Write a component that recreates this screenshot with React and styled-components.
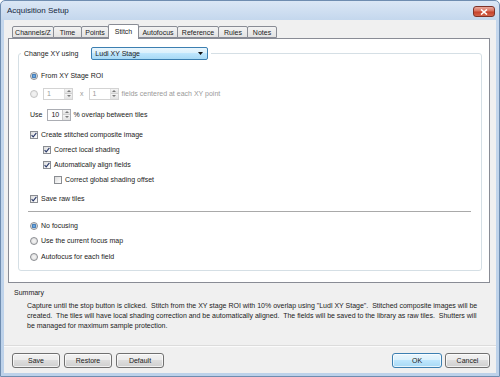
import React from "react";
import styled, { createGlobalStyle } from "styled-components";

const GlobalStyle = createGlobalStyle`
  html, body { margin: 0; padding: 0; background: #ffffff; }
  body { font-family: "Liberation Sans", Arial, sans-serif; }
  * { box-sizing: border-box; }
`;

const Window = styled.div`
  width: 500px;
  height: 377px;
  display: flex;
  flex-direction: column;
  background: linear-gradient(to bottom, #dbe7f5 0px, #c4d7ed 19px, #bdd2ea 100%);
  border: 1px solid #6f8db0;
  border-radius: 5px 5px 0 0;
  padding: 0 3px 3px 3px;
  font-size: 7px;
  color: #1b1b1b;
`;

const TitleBar = styled.div`
  height: 19px;
  display: flex;
  align-items: center;
  padding-left: 3px;
  font-size: 8px;
  color: #14263d;
`;

const CloseButton = styled.div`
  margin-left: auto;
  margin-right: 1px;
  align-self: flex-start;
  margin-top: 5px;
  width: 22px;
  height: 11px;
  border: 1px solid #7e3328;
  border-radius: 3px;
  background: linear-gradient(to bottom, #e9a99c 0%, #d8705d 45%, #c7412a 55%, #d3644b 100%);
  display: flex;
  align-items: center;
  justify-content: center;
`;

const Client = styled.div`
  flex: 1;
  background: #f0f0f0;
  display: flex;
  flex-direction: column;
  padding: 4px 6px 5px 4px;
`;

const TabStrip = styled.div`
  display: flex;
  align-items: flex-end;
  height: 14px;
  padding-left: 4px;
`;

const Tab = styled.div`
  width: ${p => p.w}px;
  height: ${p => (p.active ? 15 : 12)}px;
  margin-right: -1px;
  margin-bottom: ${p => (p.active ? -1 : 0)}px;
  border: 1px solid #898c95;
  border-bottom: ${p => (p.active ? "none" : "1px solid #898c95")};
  border-radius: 2px 2px 0 0;
  background: ${p => (p.active ? "#ffffff" : "linear-gradient(to bottom, #f3f3f3, #e3e3e3)")};
  display: flex;
  align-items: center;
  justify-content: center;
  position: relative;
  z-index: ${p => (p.active ? 1 : 0)};
  padding-bottom: ${p => (p.active ? 2 : 0)}px;
`;

const Panel = styled.div`
  height: 245px;
  border: 1px solid #898c95;
  background: #ffffff;
  display: flex;
  flex-direction: column;
  padding: 7px 7px 11px 9px;
`;

const Group = styled.fieldset`
  flex: 1;
  margin: 0;
  min-width: 0;
  border: 1px solid #d5dfe5;
  border-radius: 3px;
  padding: 0 10px 0 11px;
`;

const Legend = styled.legend`
  display: flex;
  align-items: center;
  gap: 13px;
  height: 14px;
  padding: 0 3px;
  margin-left: -9px;
`;

const Combo = styled.div`
  width: 117px;
  height: 13px;
  border: 1px solid #3c7fb1;
  border-radius: 2px;
  background: linear-gradient(to bottom, #eaf6fd 0%, #d9f0fc 50%, #bee6fd 50%, #a7d9f5 100%);
  display: flex;
  align-items: center;
  justify-content: space-between;
  padding: 0 4px 0 3px;
`;

const Row = styled.div`
  display: flex;
  align-items: center;
  height: 15px;
  margin-top: ${p => p.mt || 0}px;
  padding-left: ${p => p.indent || 0}px;
  color: ${p => (p.disabled ? "#9a9a9a" : "inherit")};
  white-space: nowrap;
`;

const Radio = styled.span`
  width: 8px;
  height: 8px;
  border-radius: 50%;
  border: 1px solid ${p => (p.disabled ? "#c4c4c4" : "#8a8d92")};
  background: ${p =>
    p.checked
      ? "radial-gradient(circle, #8fc3ee 0px, #2f6eb0 2px, #e4e4e4 2.6px, #f7f7f7 100%)"
      : p.disabled
      ? "radial-gradient(circle, #f4f4f4, #e6e6e6)"
      : "radial-gradient(circle, #f6f6f6, #d8d8d8)"};
  margin-right: 3px;
  flex: none;
`;

const Box = styled.span`
  width: 8px;
  height: 8px;
  border: 1px solid #8a8d92;
  background: linear-gradient(135deg, #dcdcdc, #ffffff);
  margin-right: 3px;
  flex: none;
  display: flex;
  align-items: center;
  justify-content: center;
`;

const Spin = styled.div`
  width: ${p => p.w}px;
  height: 12px;
  border: 1px solid ${p => (p.disabled ? "#d3d3d3" : "#abadb3")};
  background: #ffffff;
  display: flex;
  margin: 0 ${p => p.mr || 0}px 0 ${p => p.ml || 0}px;
  color: ${p => (p.disabled ? "#9a9a9a" : "#1b1b1b")};
`;

const SpinValue = styled.span`
  flex: 1;
  padding-left: 3px;
  line-height: 10px;
`;

const SpinArrows = styled.div`
  width: 8px;
  display: flex;
  flex-direction: column;
  border-left: 1px solid ${p => (p.disabled ? "#e0e0e0" : "#c9c9c9")};
`;

const SpinHalf = styled.div`
  flex: 1;
  background: linear-gradient(to bottom, #f5f5f5, #e2e2e2);
  display: flex;
  align-items: center;
  justify-content: center;
  & + & { border-top: 1px solid #d0d0d0; }
`;

const Rule = styled.div`
  height: 1px;
  background: #a9a9a9;
  margin: ${p => p.mt}px 0 0 -2px;
`;

const SummaryTitle = styled.div`
  margin: 5px 0 0 6px;
  line-height: 10px;
`;

const SummaryText = styled.div`
  margin: 3px 0 0 19px;
  line-height: 10px;
  white-space: nowrap;
`;

const BottomRule = styled.div`
  margin: auto -6px 0 -4px;
  height: 2px;
  border-top: 1px solid #dcdcdc;
  border-bottom: 1px solid #fbfbfb;
`;

const ButtonBar = styled.div`
  display: flex;
  justify-content: space-between;
  margin-top: 6px;
  padding-left: 4px;
`;

const ButtonGroup = styled.div`
  display: flex;
  gap: ${p => p.gap}px;
`;

const Button = styled.div`
  width: ${p => p.w}px;
  height: 15px;
  border: 1px solid ${p => (p.primary ? "#3c7fb1" : "#707070")};
  border-radius: 3px;
  background: ${p =>
    p.primary
      ? "linear-gradient(to bottom, #eaf6fd 0%, #d9f0fc 50%, #bee6fd 50%, #a7d9f5 100%)"
      : "linear-gradient(to bottom, #f2f2f2 0%, #ebebeb 50%, #dddddd 50%, #cfcfcf 100%)"};
  box-shadow: inset 0 0 0 1px rgba(255, 255, 255, 0.7);
  display: flex;
  align-items: center;
  justify-content: center;
`;

const Arrow = ({ up }) => (
  <svg width="4" height="2" viewBox="0 0 4 2">
    <path d={up ? "M0 2 L2 0 L4 2 Z" : "M0 0 L2 2 L4 0 Z"} fill="#7a7a7a" />
  </svg>
);

const Spinner = ({ value, w, disabled, ml, mr }) => (
  <Spin w={w} disabled={disabled} ml={ml} mr={mr}>
    <SpinValue>{value}</SpinValue>
    <SpinArrows disabled={disabled}>
      <SpinHalf><Arrow up /></SpinHalf>
      <SpinHalf><Arrow /></SpinHalf>
    </SpinArrows>
  </Spin>
);

const Check = ({ checked }) => (
  <Box>
    {checked && (
      <svg width="6" height="6" viewBox="0 0 6 6">
        <path d="M0.6 3.2 L2.2 4.9 L5.4 0.8" fill="none" stroke="#2a3a6a" strokeWidth="1.1" />
      </svg>
    )}
  </Box>
);

const tabs = [
  ["Channels/Z", 42],
  ["Time", 29],
  ["Points", 28],
  ["Stitch", 31],
  ["Autofocus", 40],
  ["Reference", 42],
  ["Rules", 30],
  ["Notes", 30],
];

export default function App() {
  return (
    <>
      <GlobalStyle />
      <Window>
        <TitleBar>
          Acquisition Setup
          <CloseButton>
            <svg width="8" height="6" viewBox="0 0 8 6">
              <path d="M1 0.5 L7 5.5 M7 0.5 L1 5.5" stroke="#ffffff" strokeWidth="1.6" />
            </svg>
          </CloseButton>
        </TitleBar>
        <Client>
          <TabStrip>
            {tabs.map(([name, w]) => (
              <Tab key={name} w={w} active={name === "Stitch"}>
                {name}
              </Tab>
            ))}
          </TabStrip>
          <Panel>
            <Group>
              <Legend>
                Change XY using
                <Combo>
                  Ludl XY Stage
                  <svg width="5" height="3" viewBox="0 0 5 3">
                    <path d="M0 0 L5 0 L2.5 3 Z" fill="#111" />
                  </svg>
                </Combo>
              </Legend>
              <Row mt={8}>
                <Radio checked />
                From XY Stage ROI
              </Row>
              <Row mt={3} disabled>
                <Radio disabled />
                <Spinner value="1" w={30} disabled ml={2} />
                <span style={{ margin: "0 5px 0 7px" }}>x</span>
                <Spinner value="1" w={30} disabled mr={3} />
                fields centered at each XY point
              </Row>
              <Row mt={6}>
                Use
                <Spinner value="10" w={24} ml={5} mr={2} />
                % overlap between tiles
              </Row>
              <Row mt={5}>
                <Check checked />
                Create stitched composite image
              </Row>
              <Row indent={13}>
                <Check checked />
                Correct local shading
              </Row>
              <Row indent={13}>
                <Check checked />
                Automatically align fields
              </Row>
              <Row indent={24}>
                <Check />
                Correct global shading offset
              </Row>
              <Row mt={4}>
                <Check checked />
                Save raw tiles
              </Row>
              <Rule mt={5} />
              <Row mt={6}>
                <Radio checked />
                No focusing
              </Row>
              <Row>
                <Radio />
                Use the current focus map
              </Row>
              <Row mt={1}>
                <Radio />
                Autofocus for each field
              </Row>
            </Group>
          </Panel>
          <SummaryTitle>Summary</SummaryTitle>
          <SummaryText>
            Capture until the stop button is clicked.&nbsp; Stitch from the XY stage ROI with 10% overlap using "Ludl XY Stage".&nbsp; Stitched composite images will be
            <br />
            created.&nbsp; The tiles will have local shading correction and be automatically aligned.&nbsp; The fields will be saved to the library as raw tiles.&nbsp; Shutters will
            <br />
            be managed for maximum sample protection.
          </SummaryText>
          <BottomRule />
          <ButtonBar>
            <ButtonGroup gap={4}>
              <Button w={48}>Save</Button>
              <Button w={48}>Restore</Button>
              <Button w={48}>Default</Button>
            </ButtonGroup>
            <ButtonGroup gap={3}>
              <Button w={50} primary>OK</Button>
              <Button w={45}>Cancel</Button>
            </ButtonGroup>
          </ButtonBar>
        </Client>
      </Window>
    </>
  );
}
